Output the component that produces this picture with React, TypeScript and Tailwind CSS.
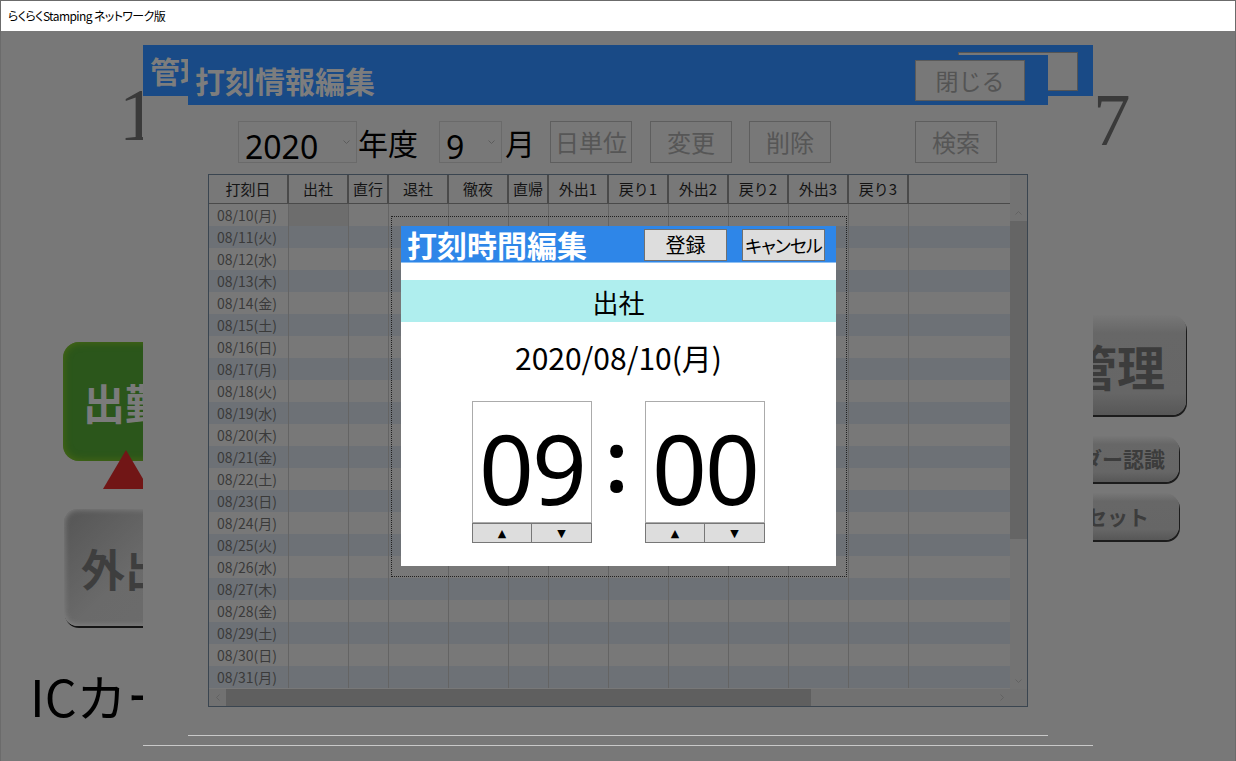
import React from "react";

const WD = ["月", "火", "水", "木", "金", "土", "日"];
const days = Array.from({ length: 22 }, (_, i) => `08/${10 + i}(${WD[i % 7]})`);

const cols = [
  { label: "出社", w: "w-[60px]" },
  { label: "直行", w: "w-[40px]" },
  { label: "退社", w: "w-[60px]" },
  { label: "徹夜", w: "w-[60px]" },
  { label: "直帰", w: "w-[40px]" },
  { label: "外出1", w: "w-[60px]" },
  { label: "戻り1", w: "w-[60px]" },
  { label: "外出2", w: "w-[60px]" },
  { label: "戻り2", w: "w-[60px]" },
  { label: "外出3", w: "w-[60px]" },
  { label: "戻り3", w: "w-[60px]" },
];

function Chevron() {
  return (
    <svg width="7" height="5" viewBox="0 0 7 5" className="absolute right-[6px] top-[18px]">
      <path d="M0.5 0.5 L3.5 3.5 L6.5 0.5" fill="none" stroke="#5c5c5c" strokeWidth="1" />
    </svg>
  );
}

function ToolButton({ label, className }: { label: string; className?: string }) {
  return (
    <div
      className={`w-[82px] h-[42px] border border-[#5e5e5e] flex items-center justify-center text-[24px] text-[#565656] ${className ?? ""}`}
    >
      {label}
    </div>
  );
}

function StampGrid() {
  return (
    <div className="mt-[11px] ml-[20px] w-[820px] h-[533px] border border-[#3a4550] flex flex-col">
      <div className="flex flex-1 min-h-0">
        <div className="w-[801px] flex flex-col">
          {/* header */}
          <div className="h-[29px] flex border-b border-[#4a4a4a] text-[15px] text-[#141414]">
            <div className="w-[80px] border-r-2 border-[#4a4a4a] flex items-center justify-center">打刻日</div>
            {cols.map((c) => (
              <div key={c.label} className={`${c.w} border-r-2 border-[#4a4a4a] flex items-center justify-center`}>
                {c.label}
              </div>
            ))}
            <div className="flex-1" />
          </div>
          {/* rows */}
          {days.map((d, i) => (
            <div key={d} className={`h-[22px] flex ${i % 2 === 1 ? "bg-[#6d7176]" : "bg-[#787878]"}`}>
              <div className="w-[80px] border-r border-[#646464] pl-[8px] text-[14px] leading-[22px] text-[#3a3a3a]">
                {d}
              </div>
              {cols.map((c, j) => (
                <div
                  key={c.label}
                  className={`${c.w} border-r border-[#646464] ${i === 0 && j === 0 ? "bg-[#6d6d6d]" : ""}`}
                />
              ))}
              <div className="flex-1" />
            </div>
          ))}
        </div>
        {/* vertical scrollbar */}
        <div className="w-[17px] bg-[#737373] flex flex-col">
          <div className="h-[29px]" />
          <div className="h-[17px] flex items-center justify-center">
            <svg width="7" height="4" viewBox="0 0 7 4">
              <path d="M0.5 3.5 L3.5 0.5 L6.5 3.5" fill="none" stroke="#626262" />
            </svg>
          </div>
          <div className="h-[318px] bg-[#656565]" />
          <div className="flex-1" />
          <div className="h-[17px] flex items-center justify-center">
            <svg width="7" height="4" viewBox="0 0 7 4">
              <path d="M0.5 0.5 L3.5 3.5 L6.5 0.5" fill="none" stroke="#626262" />
            </svg>
          </div>
        </div>
      </div>
      {/* horizontal scrollbar */}
      <div className="h-[17px] flex bg-[#717171]">
        <div className="w-[17px] flex items-center justify-center">
          <svg width="4" height="7" viewBox="0 0 4 7">
            <path d="M3.5 0.5 L0.5 3.5 L3.5 6.5" fill="none" stroke="#626262" />
          </svg>
        </div>
        <div className="w-[585px] bg-[#5f5f5f]" />
        <div className="flex-1" />
        <div className="w-[17px] flex items-center justify-center">
          <svg width="4" height="7" viewBox="0 0 4 7">
            <path d="M0.5 0.5 L3.5 3.5 L0.5 6.5" fill="none" stroke="#626262" />
          </svg>
        </div>
        <div className="w-[17px]" />
      </div>
    </div>
  );
}

function TimeBox({ value }: { value: string }) {
  return (
    <div className="w-[120px] flex flex-col">
      <div className="h-[122px] border border-[#ababab] bg-white pt-[18px] overflow-hidden">
        <div className="h-[96px] text-center text-[96px] leading-none tracking-[-2px] font-['Noto_Sans',sans-serif] text-black whitespace-nowrap">
          {value}
        </div>
      </div>
      <div className="h-[20px] flex text-[11px] leading-none font-['DejaVu_Sans',sans-serif] text-black">
        <div className="w-[60px] bg-[#dddddd] border border-[#777777] flex items-center justify-center">▲</div>
        <div className="w-[60px] bg-[#dddddd] border border-l-0 border-[#777777] flex items-center justify-center">▼</div>
      </div>
    </div>
  );
}

function TimeDialog() {
  return (
    <div className="absolute left-[390px] top-[185px] w-[456px] h-[361px] border border-dotted border-[#202020] p-[9px]">
      <div className="w-[435px] h-[340px] bg-white flex flex-col">
        <div className="h-[37px] bg-[#2e86e8] border-b border-[#8fc0f2] flex items-start">
          <div className="pl-[6px] h-[36px] flex items-center text-[30px] font-bold text-white leading-none">打刻時間編集</div>
          <div className="ml-auto mt-[3px] w-[83px] h-[32px] bg-[#dddddd] border border-[#707070] flex items-center justify-center text-[20px] text-black">
            登録
          </div>
          <div className="ml-[15px] mr-[11px] mt-[3px] w-[83px] h-[32px] bg-[#dddddd] border border-[#707070] flex items-center justify-center text-[18px] tracking-[-1px] whitespace-nowrap text-black [font-feature-settings:'palt']">
            キャンセル
          </div>
        </div>
        <div className="mt-[17px] h-[42px] bg-[#afeeee] flex items-center justify-center text-[26px] text-black">出社</div>
        <div className="mt-[17px] h-[36px] flex items-center justify-center text-[30px] text-black">2020/08/10(月)</div>
        <div className="mt-[26px] flex justify-center">
          <TimeBox value="09" />
          <div className="w-[53px] h-[122px] pt-[17px] pr-[4px] text-center text-[84px] leading-none font-semibold font-['Noto_Sans',sans-serif] text-black">
            :
          </div>
          <TimeBox value="00" />
        </div>
      </div>
    </div>
  );
}

function GreyKey({ label, className }: { label: string; className: string }) {
  return (
    <div
      className={`rounded-[14px] bg-[linear-gradient(to_bottom,#777777,#676767_18%,#666666_78%,#575757)] shadow-[1px_2px_0_#1c1c1c] flex items-center font-bold text-[#3c3c3c] whitespace-nowrap ${className}`}
    >
      {label}
    </div>
  );
}

export default function App() {
  return (
    <div className="w-[1236px] h-[761px] overflow-hidden flex flex-col bg-white border-l border-t border-r border-[#6b6b6b] font-['Noto_Sans_CJK_JP','Noto_Sans',sans-serif]">
      <div className="h-[30px] shrink-0 bg-white flex items-center pl-[7px] text-[12px] tracking-[-0.6px] text-black [font-feature-settings:'palt']">
        らくらくStamping ネットワーク版
      </div>

      <div className="relative flex-1 bg-[#787878] flex justify-between">
        {/* main stamping screen (behind) */}
        <div className="w-[142px] flex flex-col">
          <div className="h-[311px] pt-[46px] pl-[118px] text-[75px] leading-none text-[#3a3a3a] font-['Liberation_Serif',serif]">
            1
          </div>
          <div className="ml-[62px] w-[200px] h-[119px] rounded-[16px] bg-[#2b561b] shadow-[inset_0_0_9px_#4e6a12] flex items-center pl-[20px] text-[42px] font-bold text-[#7b7b7b]">
            出勤
          </div>
          <svg width="46" height="39" viewBox="0 0 46 39" className="-mt-[11px] ml-[102px] relative">
            <path d="M23 0 L46 39 L0 39 Z" fill="#711616" />
          </svg>
          <div className="mt-[20px] ml-[63px] w-[200px] h-[117px] rounded-[14px] bg-[linear-gradient(135deg,#555555,#6a6a6a_40%,#6e6e6e)] shadow-[inset_0_0_6px_#8a8a8a,1px_2px_0_#151515] flex items-center pl-[17px] text-[44px] font-bold text-[#3e3e3e]">
            外出
          </div>
          <div className="mt-[44px] ml-[29px] text-[50px] leading-none text-black whitespace-nowrap">ICカード</div>
        </div>

        <div className="w-[142px] flex flex-col items-end">
          <div className="self-start h-[284px] pt-[51px] text-[75px] leading-none text-[#3a3a3a] font-['Liberation_Serif',serif]">7</div>
          <GreyKey label="管理" className="mr-[49px] w-[200px] h-[100px] justify-end pr-[21px] text-[48px]" />
          <GreyKey label="リーダー認識" className="mt-[21px] mr-[56px] w-[180px] h-[46px] justify-end pr-[14px] text-[21px] rounded-[12px]" />
          <GreyKey label="カードリセット" className="mt-[11px] mr-[56px] w-[180px] h-[47px] justify-end pr-[30px] text-[21px] rounded-[12px]" />
        </div>

        {/* 管理 window */}
        <div className="absolute left-[142px] top-[14px] w-[950px] h-[701px] bg-[#787878] border-b border-[#c9c9c9] flex flex-col">
          <div className="h-[51px] bg-[#194a86] flex items-start">
            <div className="pl-[7px] h-[51px] flex items-center text-[30px] font-bold text-[#7d7d7d]">管理</div>
            <div className="ml-auto mr-[15px] mt-[7px] w-[120px] h-[39px] bg-[#787878] border border-[#555555]" />
          </div>
        </div>

        {/* 打刻情報編集 window */}
        <div className="absolute left-[187px] top-[24px] w-[860px] h-[681px] bg-[#787878] border-b border-[#c9c9c9] flex flex-col">
          <div className="h-[50px] bg-[#194a86] flex items-start">
            <div className="pl-[7px] h-[50px] flex items-center text-[30px] font-bold text-[#7d7d7d]">打刻情報編集</div>
            <div className="ml-auto mr-[23px] mt-[5px] w-[110px] h-[41px] bg-[#787878] border border-[#5a5a5a] flex items-center justify-center text-[23px] text-[#545454]">
              閉じる
            </div>
          </div>

          <div className="mt-[16px] h-[42px] flex items-center pl-[50px]">
            <div className="relative w-[119px] h-[42px] border border-[#6a6a6a] pl-[6px] pt-[9px] text-[32px] leading-none text-black font-['Noto_Sans',sans-serif]">
              2020
              <Chevron />
            </div>
            <div className="ml-[1px] text-[30px] text-black">年度</div>
            <div className="relative ml-[21px] w-[63px] h-[42px] border border-[#6a6a6a] pl-[6px] pt-[9px] text-[32px] leading-none text-black font-['Noto_Sans',sans-serif]">
              9
              <Chevron />
            </div>
            <div className="ml-[3px] text-[30px] text-black">月</div>
            <ToolButton label="日単位" className="ml-[15px] w-[81px]" />
            <ToolButton label="変更" className="ml-[18px]" />
            <ToolButton label="削除" className="ml-[17px]" />
            <ToolButton label="検索" className="ml-[84px]" />
          </div>

          <StampGrid />
        </div>

        <TimeDialog />
      </div>
    </div>
  );
}
